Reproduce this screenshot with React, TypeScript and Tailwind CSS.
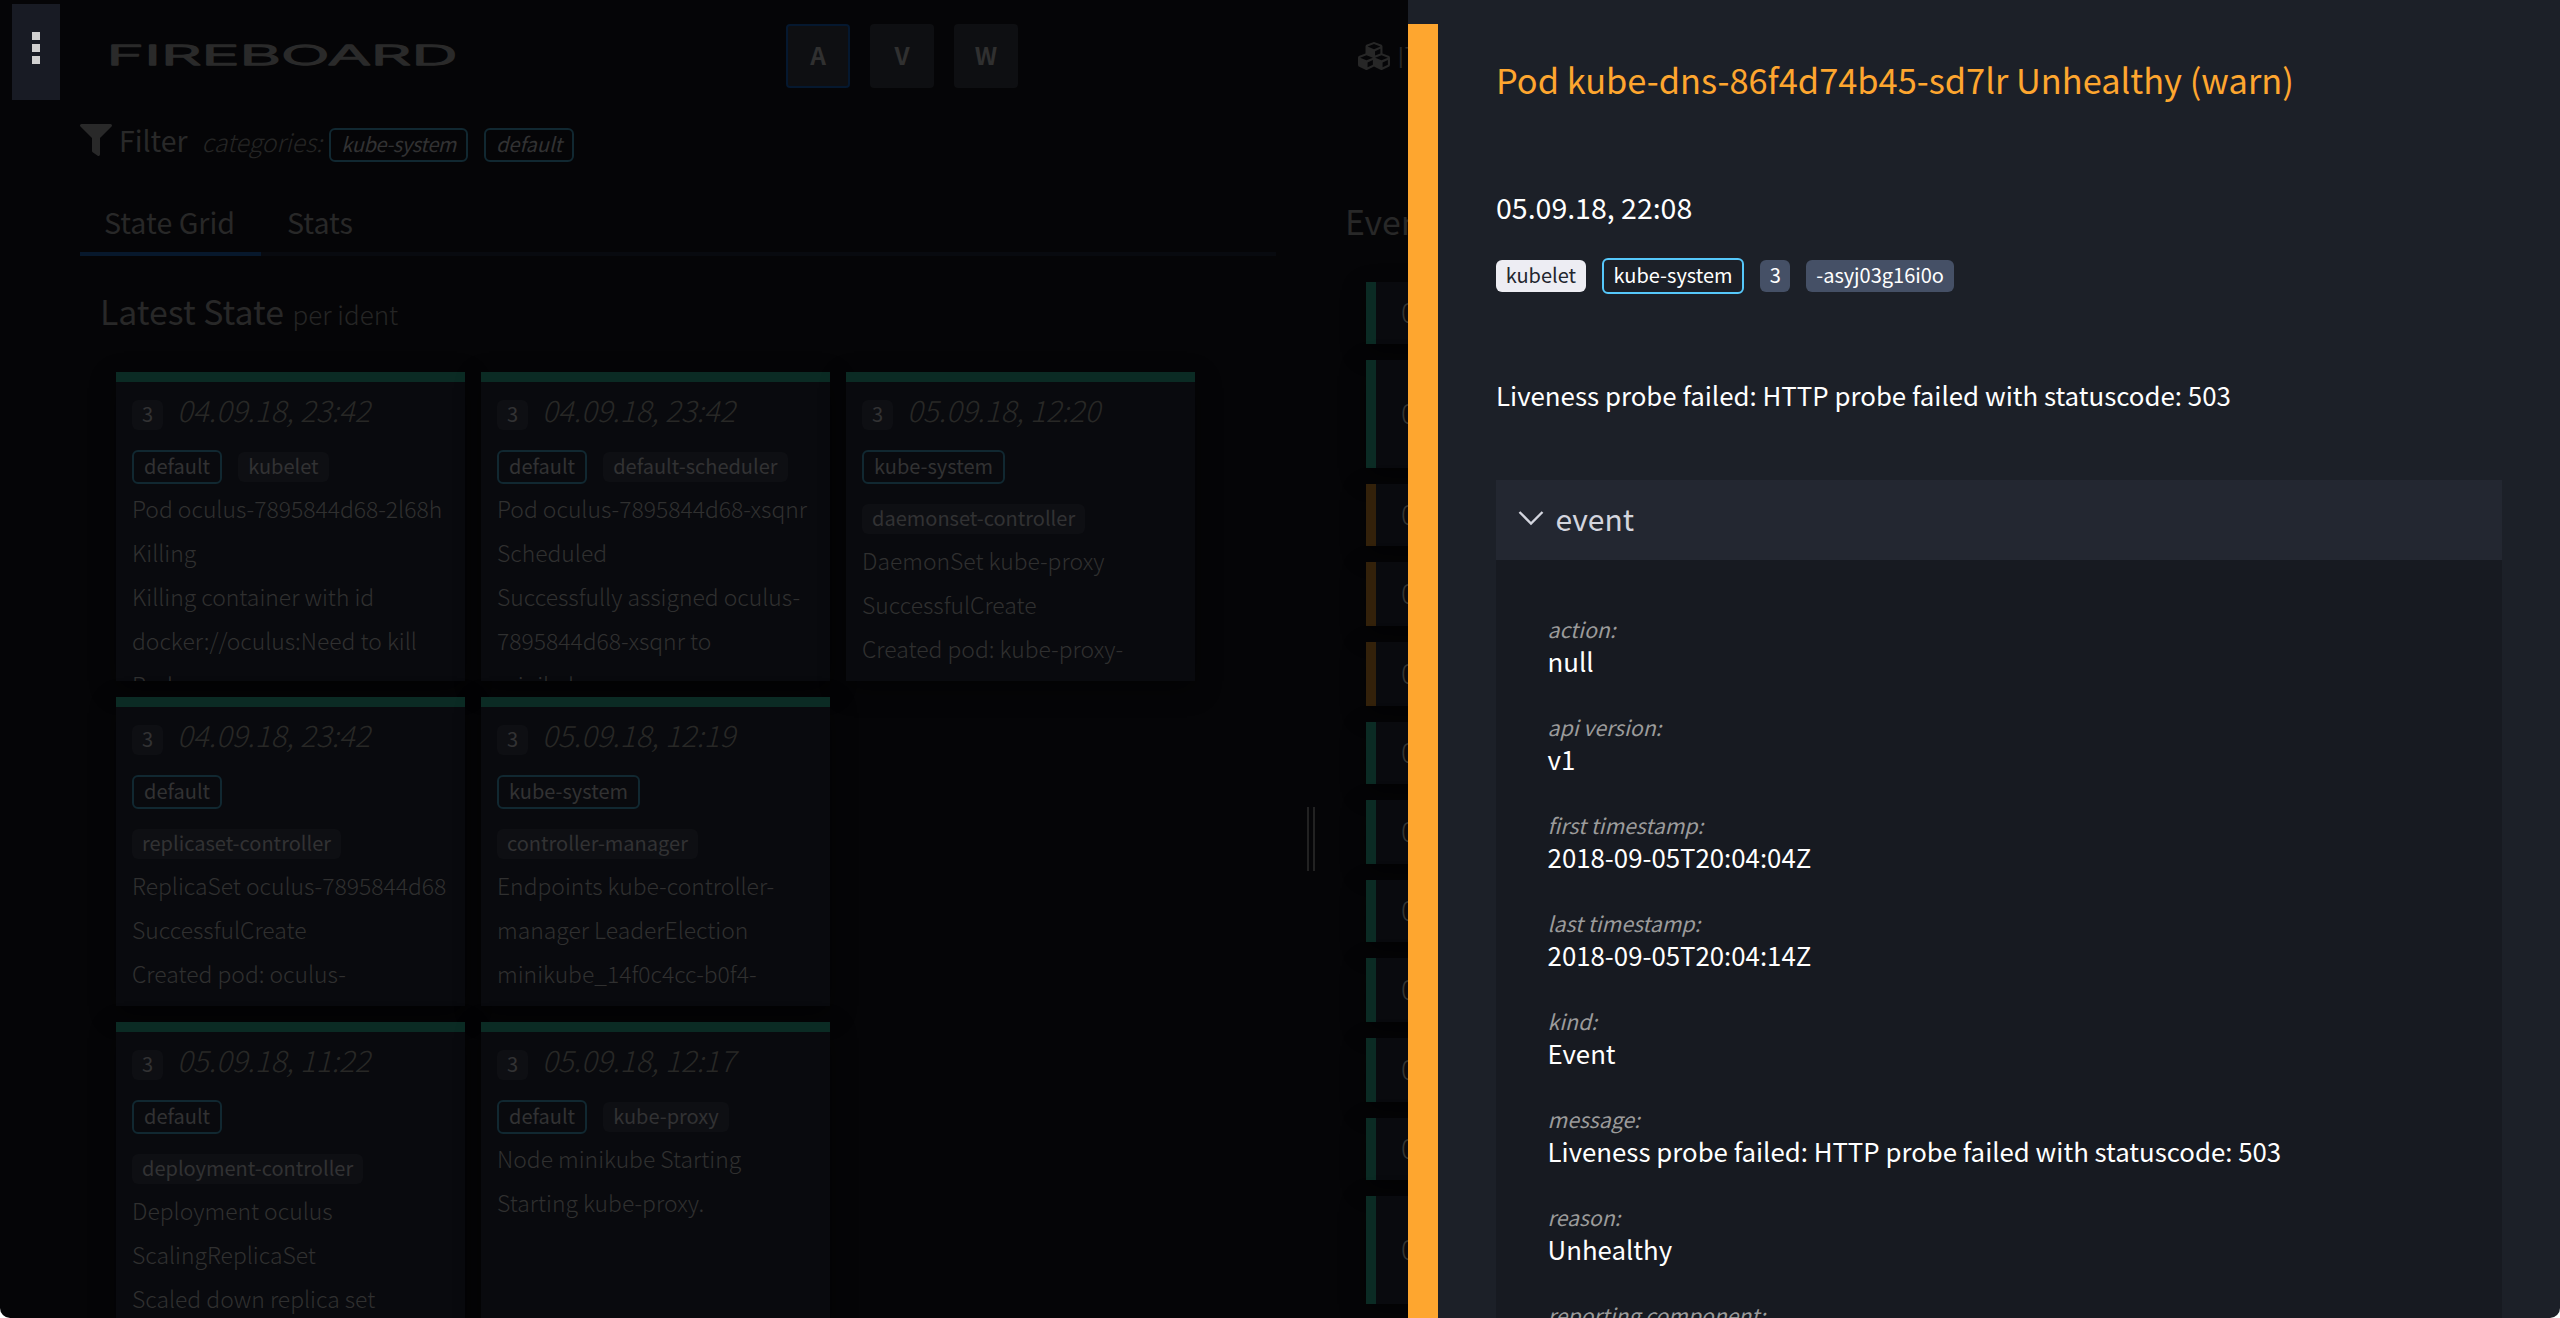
import type { ReactNode } from "react";
import { FaCubes, FaFilter } from "react-icons/fa";

type CardData = { time: string; category: string; source: string; lines: string[] };

const cards: CardData[] = [
  {
    time: "04.09.18, 23:42",
    category: "default",
    source: "kubelet",
    lines: ["Pod oculus-7895844d68-2l68h", "Killing", "Killing container with id", "docker://oculus:Need to kill", "Pod"],
  },
  {
    time: "04.09.18, 23:42",
    category: "default",
    source: "default-scheduler",
    lines: ["Pod oculus-7895844d68-xsqnr", "Scheduled", "Successfully assigned oculus-", "7895844d68-xsqnr to", "minikube"],
  },
  {
    time: "05.09.18, 12:20",
    category: "kube-system",
    source: "daemonset-controller",
    lines: ["DaemonSet kube-proxy", "SuccessfulCreate", "Created pod: kube-proxy-"],
  },
  {
    time: "04.09.18, 23:42",
    category: "default",
    source: "replicaset-controller",
    lines: ["ReplicaSet oculus-7895844d68", "SuccessfulCreate", "Created pod: oculus-"],
  },
  {
    time: "05.09.18, 12:19",
    category: "kube-system",
    source: "controller-manager",
    lines: ["Endpoints kube-controller-", "manager LeaderElection", "minikube_14f0c4cc-b0f4-"],
  },
  {
    time: "05.09.18, 11:22",
    category: "default",
    source: "deployment-controller",
    lines: ["Deployment oculus", "ScalingReplicaSet", "Scaled down replica set"],
  },
  {
    time: "05.09.18, 12:17",
    category: "default",
    source: "kube-proxy",
    lines: ["Node minikube Starting", "Starting kube-proxy."],
  },
];

const events: { level: "ok" | "warn"; height: string }[] = [
  { level: "ok", height: "h-[62px]" },
  { level: "ok", height: "h-[108px]" },
  { level: "warn", height: "h-[62px]" },
  { level: "warn", height: "h-[64px]" },
  { level: "warn", height: "h-[64px]" },
  { level: "ok", height: "h-[62px]" },
  { level: "ok", height: "h-[64px]" },
  { level: "ok", height: "h-[62px]" },
  { level: "ok", height: "h-[64px]" },
  { level: "ok", height: "h-[64px]" },
  { level: "ok", height: "h-[62px]" },
  { level: "ok", height: "h-[108px]" },
];

const fields: [string, string][] = [
  ["action:", "null"],
  ["api version:", "v1"],
  ["first timestamp:", "2018-09-05T20:04:04Z"],
  ["last timestamp:", "2018-09-05T20:04:14Z"],
  ["kind:", "Event"],
  ["message:", "Liveness probe failed: HTTP probe failed with statuscode: 503"],
  ["reason:", "Unhealthy"],
  ["reporting component:", ""],
];

function OutlineChip({ children }: { children: ReactNode }) {
  return (
    <span className="mr-4 flex h-[34px] items-center rounded-[6px] border-2 border-[#112831] px-[10px] pb-[3px] text-[20px] leading-[27px] text-[#323233]">
      {children}
    </span>
  );
}

function SolidChip({ children }: { children: ReactNode }) {
  return (
    <span className="my-[2px] mr-4 flex h-[30px] items-center rounded-[6px] bg-[#0e0f13] px-[10px] pb-[3px] text-[20px] leading-[27px] text-[#323233]">
      {children}
    </span>
  );
}

function StateCard({ card }: { card: CardData }) {
  return (
    <div className="h-[309px] overflow-hidden border-t-[10px] border-[#0b2b24] bg-[#090a0e] px-4 pt-4 shadow-[0_8px_24px_rgba(0,0,0,0.45)]">
      <div className="flex h-[34px] items-center">
        <SolidChip>3</SolidChip>
        <span className="-mt-[11px] -ml-[2px] text-[29.4px] leading-[34px] font-light text-[#282826] italic">{card.time}</span>
      </div>
      <div className="mt-[18px] flex flex-wrap gap-y-[18px]">
        <OutlineChip>{card.category}</OutlineChip>
        <SolidChip>{card.source}</SolidChip>
      </div>
      <div className="mt-[2px] text-[22.9px] leading-[44px] font-light whitespace-nowrap text-[#303030]">
        {card.lines.map((line) => (
          <div key={line}>{line}</div>
        ))}
      </div>
    </div>
  );
}

function ModeButton({ label, active }: { label: string; active?: boolean }) {
  return (
    <button
      className={
        active
          ? "h-16 w-16 rounded-[4px] border-2 border-[#05182f] bg-[#0e0f12] pb-[2px] text-[24.5px] font-bold text-[#303030]"
          : "h-16 w-16 rounded-[4px] bg-[#0e0f12] pb-[2px] text-[24.5px] font-bold text-[#303030]"
      }
    >
      {label}
    </button>
  );
}

function Dashboard() {
  return (
    <main className="relative h-full w-[1408px] shrink-0 overflow-hidden bg-[#050507]">
      <button className="absolute top-1 left-3 flex h-24 w-12 flex-col items-center gap-1 bg-[#181b24] pt-7">
        <i className="h-2 w-2 bg-[#d0d0d0]" />
        <i className="h-2 w-2 bg-[#d0d0d0]" />
        <i className="h-2 w-2 bg-[#d0d0d0]" />
      </button>

      <header className="flex h-28 items-center">
        <svg className="ml-[104px] h-[40px] w-[356px] shrink-0 overflow-visible" viewBox="0 0 356 40">
          <text
            x="2.5"
            y="29"
            textLength="351"
            lengthAdjust="spacingAndGlyphs"
            fill="#2a2a2a"
            stroke="#2a2a2a"
            strokeWidth="1.3"
            strokeLinejoin="round"
            className="font-['Inter'] text-[27.5px] font-light"
          >
            FIREBOARD
          </text>
        </svg>
        <div className="ml-[326px] flex gap-5">
          <ModeButton label="A" active />
          <ModeButton label="V" />
          <ModeButton label="W" />
        </div>
        <FaCubes className="ml-[340px] h-8 w-8 shrink-0 text-[#272727]" />
        <span className="ml-[7px] pb-[1px] text-[28px] font-light text-[#282828]">IT</span>
      </header>

      <div className="mt-[10.6px] ml-20 flex h-[39.4px] items-baseline">
        <FaFilter className="mt-[1.4px] h-8 w-8 self-start text-[#292929]" />
        <span className="ml-[7px] text-[28.4px] leading-[34px] text-[#292929]">Filter</span>
        <span className="ml-[14px] text-[24.8px] leading-[34px] font-light text-[#252525] italic">categories:</span>
        <div className="ml-[7px] flex italic">
          <span className="tracking-[-0.4px]">
            <OutlineChip>kube-system</OutlineChip>
          </span>
          <OutlineChip>default</OutlineChip>
        </div>
      </div>

      <div className="flex">
        <section className="ml-20 w-[1196px] shrink-0">
          <nav className="mt-[29px] flex border-b-4 border-[#080a0f] text-[28.6px] text-[#282828]">
            <span className="-mb-1 h-[65px] border-b-4 border-[#07182c] pr-[26px] pl-[24px] leading-[61px]">State Grid</span>
            <span className="h-[61px] px-[26px] leading-[61px]">Stats</span>
          </nav>
          <h2 className="mt-[31.3px] ml-[20px] text-[33.8px] leading-[48px] text-[#282828]">
            Latest State <small className="ml-[1px] text-[26px] leading-none font-light text-[#252525]">per ident</small>
          </h2>
          <div className="mt-[36.7px] ml-9 grid w-[1079px] grid-cols-3 gap-4">
            {cards.slice(0, 3).map((c, i) => (
              <StateCard key={i} card={c} />
            ))}
            {cards.slice(3, 5).map((c, i) => (
              <StateCard key={i} card={c} />
            ))}
            <i />
            {cards.slice(5).map((c, i) => (
              <StateCard key={i} card={c} />
            ))}
          </div>
        </section>

        <div className="mt-[645px] ml-[31px] flex h-16 w-2 shrink-0 justify-between">
          <i className="w-[2px] bg-[#222222]" />
          <i className="w-[2px] bg-[#222222]" />
        </div>

        <section className="ml-[30px] w-[620px] shrink-0">
          <h2 className="mt-[35.3px] text-[33.8px] leading-[48px] text-[#282828]">Events</h2>
          <div className="mt-[36.7px] ml-[21px] flex flex-col gap-4">
            {events.map((e, i) => (
              <div
                key={i}
                className={`flex items-center border-l-[10px] bg-[#090a0e] pb-1 pl-[25px] shadow-[0_8px_24px_rgba(0,0,0,0.45)] ${
                  e.height
                } ${e.level === "ok" ? "border-[#0b2b24]" : "border-[#33210a]"}`}
              >
                <span className="text-[28px] leading-[40px] font-light text-[#343432]">05.09.18</span>
              </div>
            ))}
          </div>
        </section>
      </div>
    </main>
  );
}

function DetailPanel() {
  return (
    <aside className="flex h-full w-[1152px] shrink-0 bg-[#1c2028]">
      <div className="mt-6 w-[30px] shrink-0 bg-[#fea62f]" />
      <div className="flex w-[1122px] flex-col pr-[58px] pl-[58px]">
        <h1 className="mt-[49px] text-[34.4px] leading-[60px] whitespace-nowrap text-[#fea62f]">
          Pod kube-dns-86f4d74b45-sd7lr Unhealthy (warn)
        </h1>
        <time className="mt-[78.2px] text-[28.5px] leading-[40px] text-white">05.09.18, 22:08</time>
        <div className="mt-[30.8px] flex items-center gap-4 text-[20px] leading-[30px] text-white">
          <span className="flex h-8 items-center rounded-[6px] bg-[#ededf3] px-[9.7px] pb-[2px] text-[#23262e]">kubelet</span>
          <span className="flex h-9 items-center rounded-[6px] border-2 border-[#56c8fb] px-[9.8px] pb-[2px]">kube-system</span>
          <span className="flex h-8 items-center rounded-[6px] bg-[#455066] px-[9.4px] pb-[2px]">3</span>
          <span className="flex h-8 items-center rounded-[6px] bg-[#455066] px-[10px] pb-[2px]">-asyj03g16i0o</span>
        </div>
        <p className="mt-[80.7px] text-[25.85px] leading-[40px] text-white">
          Liveness probe failed: HTTP probe failed with statuscode: 503
        </p>
        <div className="mt-[65.3px] flex h-20 shrink-0 items-center bg-[#232731] pl-[22px]">
          <svg className="-mt-[4px] h-4 w-[26px]" viewBox="0 0 26 16" fill="none" stroke="#d3d5de" strokeWidth="2.4">
            <path d="M1.5 2 13 13.5 24.5 2" />
          </svg>
          <span className="ml-[11.5px] pb-[3px] text-[30px] leading-[40px] text-[#d3d5de]">event</span>
        </div>
        <dl className="flex min-h-0 grow flex-col gap-[33.8px] overflow-hidden bg-[#171a21] pt-[52.8px] pl-[51.6px]">
          {fields.map(([label, value]) => (
            <div key={label} className="shrink-0">
              <dt className="text-[21.2px] leading-[31px] text-[#9b9b9b] italic">{label}</dt>
              <dd className="h-[33.2px] text-[25.8px] leading-[33.2px] text-white">{value}</dd>
            </div>
          ))}
        </dl>
      </div>
    </aside>
  );
}

export default function App() {
  return (
    <div className="bg-white">
      <div className="flex h-[1318px] w-[2560px] overflow-hidden rounded-b-[10px] font-['Noto_Sans_CJK_SC',sans-serif]">
        <Dashboard />
        <DetailPanel />
      </div>
    </div>
  );
}
